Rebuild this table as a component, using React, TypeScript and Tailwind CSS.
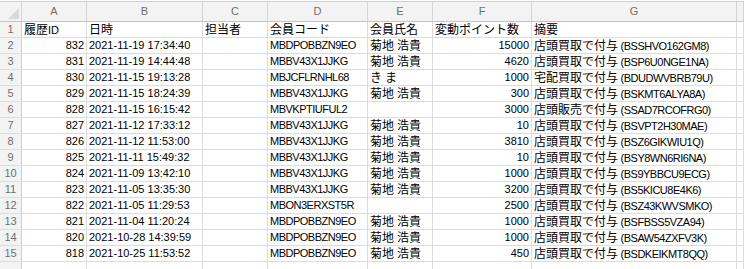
import React from "react";

const rows: [string, string, string, string, string, string, string][] = [
  ["履歴ID", "日時", "担当者", "会員コード", "会員氏名", "変動ポイント数", "摘要"],
  ["832", "2021-11-19 17:34:40", "", "MBDPOBBZN9EO", "菊地 浩貴", "15000", "店頭買取で付与 (BSSHVO162GM8)"],
  ["831", "2021-11-19 14:44:48", "", "MBBV43X1JJKG", "菊地 浩貴", "4620", "店頭買取で付与 (BSP6U0NGE1NA)"],
  ["830", "2021-11-15 19:13:28", "", "MBJCFLRNHL68", "き ま", "1000", "宅配買取で付与 (BDUDWVBRB79U)"],
  ["829", "2021-11-15 18:24:39", "", "MBBV43X1JJKG", "菊地 浩貴", "300", "店頭買取で付与 (BSKMT6ALYA8A)"],
  ["828", "2021-11-15 16:15:42", "", "MBVKPTIUFUL2", "", "3000", "店頭販売で付与 (SSAD7RCOFRG0)"],
  ["827", "2021-11-12 17:33:12", "", "MBBV43X1JJKG", "菊地 浩貴", "10", "店頭買取で付与 (BSVPT2H30MAE)"],
  ["826", "2021-11-12 11:53:00", "", "MBBV43X1JJKG", "菊地 浩貴", "3810", "店頭買取で付与 (BSZ6GIKWIU1Q)"],
  ["825", "2021-11-11 15:49:32", "", "MBBV43X1JJKG", "菊地 浩貴", "10", "店頭買取で付与 (BSY8WN6RI6NA)"],
  ["824", "2021-11-09 13:42:10", "", "MBBV43X1JJKG", "菊地 浩貴", "1000", "店頭買取で付与 (BS9YBBCU9ECG)"],
  ["823", "2021-11-05 13:35:30", "", "MBBV43X1JJKG", "菊地 浩貴", "3200", "店頭買取で付与 (BS5KICU8E4K6)"],
  ["822", "2021-11-05 11:29:53", "", "MBON3ERXST5R", "", "2500", "店頭買取で付与 (BSZ43KWVSMKO)"],
  ["821", "2021-11-04 11:20:24", "", "MBDPOBBZN9EO", "菊地 浩貴", "1000", "店頭買取で付与 (BSFBSS5VZA94)"],
  ["820", "2021-10-28 14:39:59", "", "MBDPOBBZN9EO", "菊地 浩貴", "1000", "店頭買取で付与 (BSAW54ZXFV3K)"],
  ["818", "2021-10-25 11:53:52", "", "MBDPOBBZN9EO", "菊地 浩貴", "450", "店頭買取で付与 (BSDKEIKMT8QQ)"],
];

const cols = ["A", "B", "C", "D", "E", "F", "G", ""];
const grid = "grid grid-cols-[22px_65px_116px_65px_100px_65px_99px_205px_1fr]";

const CJK = /[\u3000-\u30ff\u4e00-\u9fff\uff00-\uffef]/;

function renderText(v: string, code: boolean) {
  const parts = v.split(/([\u3000-\u30ff\u4e00-\u9fff\uff00-\uffef]+)/);
  return (
    <span className="whitespace-pre">
      {parts.map((p, i) => {
        if (!p) return null;
        if (CJK.test(p)) {
          return (
            <span key={i} className="text-[12px]">
              {p}
            </span>
          );
        }
        if (code || p.includes("(")) {
          return (
            <span key={i} className="tracking-[-0.5px]">
              {p}
            </span>
          );
        }
        return <span key={i}>{p}</span>;
      })}
    </span>
  );
}

export default function App() {
  return (
    <div
      className="h-[269px] w-[744px] overflow-hidden bg-white text-[11px] text-black"
      style={{ fontFamily: '"Liberation Sans", "Noto Sans CJK JP", sans-serif' }}
    >
      <div className="h-[1px] bg-white" />
      <div className={`${grid} h-[21px] border-t border-b border-[#cfcfcf] border-b-[#c4c4c4] bg-[#f3f3f3] text-[#6f6f6f]`}>
        <div className="relative border-r border-[#d4d4d4]">
          <svg className="absolute bottom-[2px] right-[2px]" width="11" height="11" viewBox="0 0 11 11">
            <polygon points="11,0 11,11 0,11" fill="#d9d9d9" />
          </svg>
        </div>
        {cols.map((c, i) => (
          <div key={i} className="flex items-center justify-center border-r border-[#d4d4d4] leading-none">
            {c}
          </div>
        ))}
      </div>
      {rows.map((r, ri) => (
        <div key={ri} className={`${grid} h-[16px] border-b border-[#dcdcdc]`}>
          <div className="flex items-center justify-center border-r border-[#cfcfcf] bg-[#f3f3f3] leading-none text-[#6f6f6f]">
            {ri + 1}
          </div>
          {r.map((v, ci) => {
            const right = ri > 0 && (ci === 0 || ci === 5);
            return (
              <div
                key={ci}
                className={`flex items-center overflow-visible whitespace-nowrap border-r border-[#dcdcdc] px-[2px] leading-none ${right ? "justify-end" : "justify-start"}`}
              >
                {renderText(v, ri > 0 && ci === 3)}
              </div>
            );
          })}
          <div className="border-r border-[#dcdcdc]" />
        </div>
      ))}
      <div className={`${grid} h-[16px]`}>
        <div className="border-r border-[#cfcfcf] bg-[#f3f3f3]" />
        {cols.map((_, i) => (
          <div key={i} className="border-r border-[#dcdcdc]" />
        ))}
      </div>
    </div>
  );
}
